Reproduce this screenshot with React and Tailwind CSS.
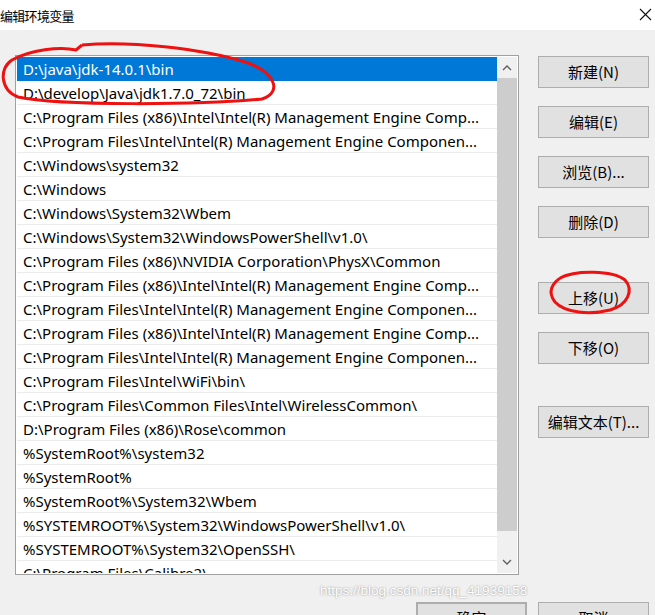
import React from "react";

const rows = [
  "D:\\java\\jdk-14.0.1\\bin",
  "D:\\develop\\Java\\jdk1.7.0_72\\bin",
  "C:\\Program Files (x86)\\Intel\\Intel(R) Management Engine Comp...",
  "C:\\Program Files\\Intel\\Intel(R) Management Engine Componen...",
  "C:\\Windows\\system32",
  "C:\\Windows",
  "C:\\Windows\\System32\\Wbem",
  "C:\\Windows\\System32\\WindowsPowerShell\\v1.0\\",
  "C:\\Program Files (x86)\\NVIDIA Corporation\\PhysX\\Common",
  "C:\\Program Files (x86)\\Intel\\Intel(R) Management Engine Comp...",
  "C:\\Program Files\\Intel\\Intel(R) Management Engine Componen...",
  "C:\\Program Files (x86)\\Intel\\Intel(R) Management Engine Comp...",
  "C:\\Program Files\\Intel\\Intel(R) Management Engine Componen...",
  "C:\\Program Files\\Intel\\WiFi\\bin\\",
  "C:\\Program Files\\Common Files\\Intel\\WirelessCommon\\",
  "D:\\Program Files (x86)\\Rose\\common",
  "%SystemRoot%\\system32",
  "%SystemRoot%",
  "%SystemRoot%\\System32\\Wbem",
  "%SYSTEMROOT%\\System32\\WindowsPowerShell\\v1.0\\",
  "%SYSTEMROOT%\\System32\\OpenSSH\\",
  "C:\\Program Files\\Calibre2\\",
];

function Btn({ children, className = "" }) {
  return (
    <div
      className={
        "h-[32px] w-[111px] flex items-center justify-center bg-[#e1e1e1] border border-[#adadad] text-[15px] text-black " +
        className
      }
    >
      {children}
    </div>
  );
}

export default function App() {
  return (
    <div className="relative w-[655px] h-[615px] overflow-hidden bg-[#f0f0f0] font-['Noto_Sans','Noto_Sans_CJK_SC',sans-serif] text-black">
      {/* title bar */}
      <div className="h-[30px] bg-white flex items-center justify-between pr-[3px]">
        <span className="text-[13px] tracking-[-0.7px] font-['Noto_Sans_CJK_SC',sans-serif] leading-none">
          编辑环境变量
        </span>
        <svg width="13" height="13" viewBox="0 0 13 13" className="mb-[2px]">
          <path d="M1 1 L12 12 M12 1 L1 12" stroke="#111" strokeWidth="1.1" fill="none" />
        </svg>
      </div>

      {/* body */}
      <div className="flex pl-[15px] pt-[25px]">
        <div className="w-[504px] h-[520px] border border-[#a0a0a0] bg-white p-px flex">
          <div className="w-[480px] overflow-hidden">
            {rows.map((r, i) => (
              <div
                key={i}
                className={
                  "h-[24px] shrink-0 flex items-center pl-[6px] pt-px whitespace-nowrap text-[15px] border-b " +
                  (i === 0
                    ? "bg-[#0078d7] text-white border-[#0078d7]"
                    : "border-[#ececec]")
                }
              >
                {r}
              </div>
            ))}
          </div>
          <div className="w-[20px] bg-[#f0f0f0] flex flex-col">
            <div className="h-[21px] flex items-center justify-center">
              <svg width="10" height="6" viewBox="0 0 10 6">
                <path d="M1 5 L5 1 L9 5" stroke="#606060" strokeWidth="1.4" fill="none" />
              </svg>
            </div>
            <div className="h-[453px] bg-[#cdcdcd]" />
            <div className="flex-1 flex items-end justify-center pb-[8px]">
              <svg width="10" height="6" viewBox="0 0 10 6">
                <path d="M1 1 L5 5 L9 1" stroke="#606060" strokeWidth="1.4" fill="none" />
              </svg>
            </div>
          </div>
        </div>

        <div className="ml-[19px] pt-px flex flex-col font-['Noto_Sans_CJK_SC','Noto_Sans',sans-serif]">
          <Btn>新建(N)</Btn>
          <Btn className="mt-[18px]">编辑(E)</Btn>
          <Btn className="mt-[18px]">浏览(B)...</Btn>
          <Btn className="mt-[18px]">删除(D)</Btn>
          <Btn className="mt-[44px]">上移(U)</Btn>
          <Btn className="mt-[18px]">下移(O)</Btn>
          <Btn className="mt-[42px]">编辑文本(T)...</Btn>
        </div>
      </div>

      {/* bottom buttons */}
      <div className="flex pl-[416px] mt-[27px] gap-[11px] font-['Noto_Sans_CJK_SC','Noto_Sans',sans-serif]">
        <Btn className="border-2 border-[#0078d7]">确定</Btn>
        <Btn>取消</Btn>
      </div>

      {/* watermark */}
      <div className="absolute left-[320px] top-[581px] text-[13.5px] leading-[20px] text-white font-['Liberation_Sans',sans-serif] [text-shadow:0_0_2px_rgba(0,0,0,0.45)] whitespace-nowrap">
        https://blog.csdn.net/qq_41939158
      </div>

      {/* red annotations */}
      <svg className="absolute inset-0 pointer-events-none" width="655" height="615" viewBox="0 0 655 615">
        <path
          d="M82 45 C130 41 200 48 245 62 C275 72 283 92 262 99 C200 105 60 106 18 97 C0 90 -1 68 12 60 C30 50 60 46 76 50 L82 45"
          stroke="#ee1111"
          strokeWidth="3"
          fill="none"
          strokeLinejoin="round"
        />
        <path
          d="M560 278 C575 270 612 270 625 280 C634 290 628 305 610 310 C590 315 565 313 555 302 C548 293 550 283 564 276"
          stroke="#ee1111"
          strokeWidth="3"
          fill="none"
        />
      </svg>
    </div>
  );
}
